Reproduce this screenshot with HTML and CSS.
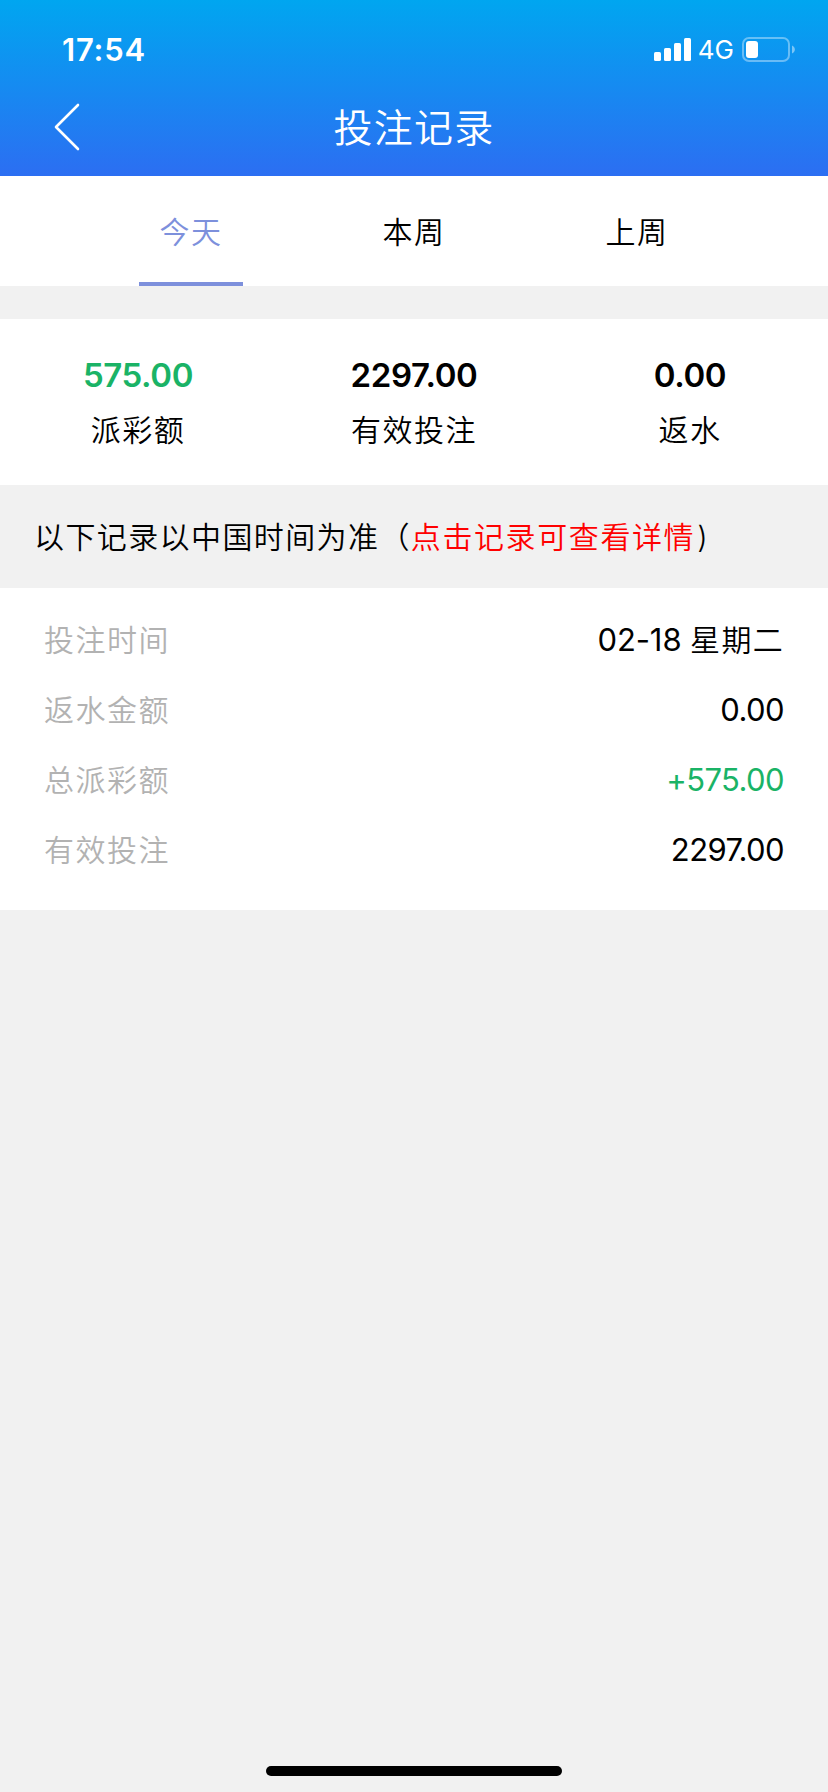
FILE: index.html
```
<!DOCTYPE html>
<html lang="zh-CN">
<head>
    <meta charset="UTF-8">
    <title>投注记录</title>
    <link rel="stylesheet" href="styles.css">
</head>
<body>
    <header>
        <div class="status-bar">
            <span class="time">17:54</span>
            <div class="status-icons">
                <svg class="signal" width="37" height="23" viewBox="0 0 37 23" fill="#fff">
                    <rect x="0" y="14" width="7" height="9" rx="1.6"/>
                    <rect x="10" y="10" width="7" height="13" rx="1.6"/>
                    <rect x="20" y="5" width="7" height="18" rx="1.6"/>
                    <rect x="30" y="0" width="7" height="23" rx="1.6"/>
                </svg>
                <span class="network">4G</span>
                <svg class="battery" width="53" height="25" viewBox="0 0 53 25">
                    <rect x="1" y="1" width="46" height="23" rx="6" fill="none" stroke="#fff" stroke-opacity="0.38" stroke-width="2"/>
                    <rect x="4" y="4" width="12" height="17" rx="3" fill="#fff"/>
                    <path d="M50 8.5 C53.8 10 53.8 15 50 16.5 Z" fill="#fff" fill-opacity="0.45"/>
                </svg>
            </div>
        </div>
        <div class="title-bar">
            <a href="#" class="back">
                <svg width="26" height="48" viewBox="0 0 26 48" fill="none" stroke="#fff" stroke-width="2.6" stroke-linecap="round" stroke-linejoin="round">
                    <path d="M24 2 L2 24 L24 46"/>
                </svg>
            </a>
            <h1>投注记录</h1>
        </div>
    </header>

    <nav class="tabs">
        <a href="#" class="tab active">今天</a>
        <a href="#" class="tab">本周</a>
        <a href="#" class="tab">上周</a>
    </nav>

    <main>
        <div class="summary">
            <div class="summary-item">
                <strong class="green">575.00</strong>
                <span>派彩额</span>
            </div>
            <div class="summary-item">
                <strong>2297.00</strong>
                <span>有效投注</span>
            </div>
            <div class="summary-item">
                <strong>0.00</strong>
                <span>返水</span>
            </div>
        </div>

        <p class="note">以下记录以中国时间为准（<span class="red">点击记录可查看详情</span>)</p>

        <div class="record">
            <div class="row">
                <span class="label">投注时间</span>
                <span class="value date">02-18 <span class="weekday">星期二</span></span>
            </div>
            <div class="row">
                <span class="label">返水金额</span>
                <span class="value">0.00</span>
            </div>
            <div class="row">
                <span class="label">总派彩额</span>
                <span class="value green">+575.00</span>
            </div>
            <div class="row">
                <span class="label">有效投注</span>
                <span class="value">2297.00</span>
            </div>
        </div>
    </main>

    <div class="home-indicator"></div>
</body>
</html>
```
FILE: styles.css
```
* {
    box-sizing: border-box;
}

body {
    display: flex;
    flex-direction: column;
    height: 1792px;
    margin: 0;
    font-family: Inter, "Noto Sans CJK SC", sans-serif;
    font-size: 30px;
    font-weight: 350;
    color: #000;
    background-color: #f1f1f1;
}

a {
    color: inherit;
    text-decoration: none;
}

header {
    height: 176px;
    color: #fff;
    background: linear-gradient(to bottom, #00a6f0, #2c6ef2);
}

.status-bar {
    display: flex;
    justify-content: space-between;
    align-items: center;
    height: 88px;
    padding: 11px 33px 0 62px;
}

.time {
    font-size: 31px;
    font-weight: 600;
    line-height: 36px;
    letter-spacing: 0.8px;
}

.status-icons {
    display: flex;
    align-items: center;
}

.network {
    margin: 0 8px 0 7px;
    font-size: 26px;
    font-weight: 400;
    line-height: 25px;
}

.title-bar {
    display: grid;
    grid-template-columns: 100px 1fr 100px;
    align-items: center;
    height: 78px;
}

.back {
    display: flex;
    padding-left: 54px;
}

h1 {
    margin: 0;
    padding-top: 2px;
    font-size: 39px;
    font-weight: 350;
    line-height: 76px;
    letter-spacing: 1.3px;
    text-align: center;
}

.tabs {
    display: flex;
    justify-content: center;
    gap: 119px;
    height: 110px;
    background-color: #fff;
}

.tab {
    width: 104px;
    line-height: 112px;
    letter-spacing: 1.4px;
    text-align: center;
    border-bottom: 4px solid transparent;
}

.tab.active {
    color: #7d90dc;
    border-bottom-color: #7d90dc;
}

main {
    flex: 1;
    margin-top: 33px;
}

.summary {
    display: grid;
    grid-template-columns: repeat(3, 1fr);
    height: 166px;
    padding-top: 31px;
    text-align: center;
    background-color: #fff;
}

.summary-item {
    display: flex;
    flex-direction: column;
}

.summary-item strong {
    font-size: 33px;
    font-weight: 600;
    line-height: 50px;
    letter-spacing: -0.4px;
}

.summary-item span {
    line-height: 60px;
    letter-spacing: 1.5px;
}

.note {
    height: 103px;
    margin: 0;
    padding-left: 34px;
    line-height: 104px;
    letter-spacing: 1.4px;
}

.note .red {
    margin-right: 2px;
    letter-spacing: 1.6px;
}

.record {
    height: 322px;
    padding: 16px 44px 0 44px;
    background-color: #fff;
}

.row {
    display: flex;
    justify-content: space-between;
    height: 70px;
    line-height: 71px;
}

.label {
    line-height: 72px;
    color: #b2b2b2;
    letter-spacing: 1.5px;
}

.value {
    font-size: 31px;
    font-weight: 400;
    letter-spacing: -0.6px;
}

.date {
    letter-spacing: -0.1px;
}

.weekday {
    font-size: 30px;
    font-weight: 350;
    letter-spacing: 1.3px;
}

.green {
    color: #1ab366;
}

.red {
    color: #f00;
}

.home-indicator {
    width: 296px;
    height: 10px;
    margin: 0 auto 16px;
    border-radius: 5px;
    background-color: #000;
}
```
